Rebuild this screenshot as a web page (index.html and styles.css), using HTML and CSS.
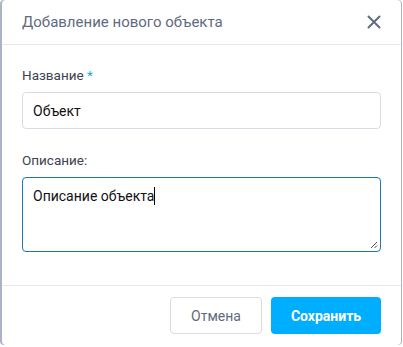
FILE: index.html
```html
<!DOCTYPE html>
<html lang="ru">
<head>
  <meta charset="UTF-8">
  <meta name="viewport" content="width=device-width, initial-scale=1.0">
  <title>Добавление нового объекта</title>
  <link rel="stylesheet" href="styles.css">
</head>
<body>
  <div class="dialog">
    <div class="dialog-header">
      <h1>Добавление нового объекта</h1>
      <button type="button" class="close-button" aria-label="Закрыть">
        <svg width="14" height="14" viewBox="0 0 14 14">
          <path d="M1.5 1.5L12.5 12.5M12.5 1.5L1.5 12.5" stroke="#5f6b80" stroke-width="2" stroke-linecap="round"/>
        </svg>
      </button>
    </div>
    <form id="object-form" class="dialog-body">
      <label for="o_name">Название <span class="required">*</span></label>
      <input type="text" id="o_name" name="o_name" value="Объект">

      <label for="o_desc">Описание:</label>
      <div class="textarea-box">
        <span class="textarea-text">Описание объекта</span><span class="caret"></span>
        <svg class="resize" width="8" height="8" viewBox="0 0 8 8">
          <path d="M1 7L7 1M4.5 7L7 4.5" stroke="#555" stroke-width="1"/>
        </svg>
      </div>
    </form>
    <div class="dialog-footer">
      <button type="button" class="btn btn-cancel">Отмена</button>
      <button type="submit" form="object-form" class="btn btn-save">Сохранить</button>
    </div>
  </div>
</body>
</html>
```

FILE: styles.css
```css
body {
  margin: 0;
  font-family: Roboto, "Noto Sans", Arial, sans-serif;
  background-color: #fff;
}
.dialog {
  width: 399px;
  height: 345px;
  margin-left: 2px;
  background-color: #fff;
  border-radius: 4px;
  box-shadow: -2px 0 0 #aab2c4, 1px 0 0 #aab2c4;
  display: flex;
  flex-direction: column;
  box-sizing: border-box;
}
.dialog-header {
  height: 44px;
  display: flex;
  align-items: center;
  justify-content: space-between;
  padding: 0 20px;
  border-bottom: 1px solid #e4e7ed;
}
h1 {
  margin: 0;
  font-size: 15px;
  font-weight: 400;
  color: #5f6b80;
}
.close-button {
  background: none;
  border: none;
  padding: 0;
  width: 14px;
  height: 14px;
  display: flex;
}
.dialog-body {
  flex: 1;
  padding: 22px 20px 0 20px;
  display: flex;
  flex-direction: column;
}
label {
  font-size: 13.5px;
  color: #3d4350;
  margin-bottom: 9px;
  line-height: 16px;
}
.required {
  color: #1aa7ec;
}
input {
  height: 37px;
  box-sizing: border-box;
  border: 1px solid #d8dce6;
  border-radius: 4px;
  padding: 0 10px;
  font-family: inherit;
  font-size: 14px;
  color: #111;
  margin-bottom: 23px;
  outline: none;
}
.textarea-box {
  position: relative;
  height: 75px;
  box-sizing: border-box;
  border: 1px solid #1b78b6;
  border-radius: 4px;
  padding: 9px 10px;
  font-size: 14px;
  color: #111;
  line-height: 18px;
}
.caret {
  display: inline-block;
  width: 1px;
  height: 18px;
  background-color: #000;
  vertical-align: top;
}
.resize {
  position: absolute;
  right: 2px;
  bottom: 2px;
}
.dialog-footer {
  border-top: 1px solid #e4e7ed;
  display: flex;
  justify-content: flex-end;
  gap: 9px;
  padding: 11px 20px;
}
.btn {
  height: 37px;
  border-radius: 4px;
  font-family: inherit;
  font-size: 14px;
  cursor: pointer;
}
.btn-cancel {
  width: 92px;
  background-color: #fff;
  border: 1px solid #d8dce6;
  color: #5f6b80;
}
.btn-save {
  width: 110px;
  background-color: #00aeff;
  border: none;
  color: #fff;
  font-weight: 700;
}
```
